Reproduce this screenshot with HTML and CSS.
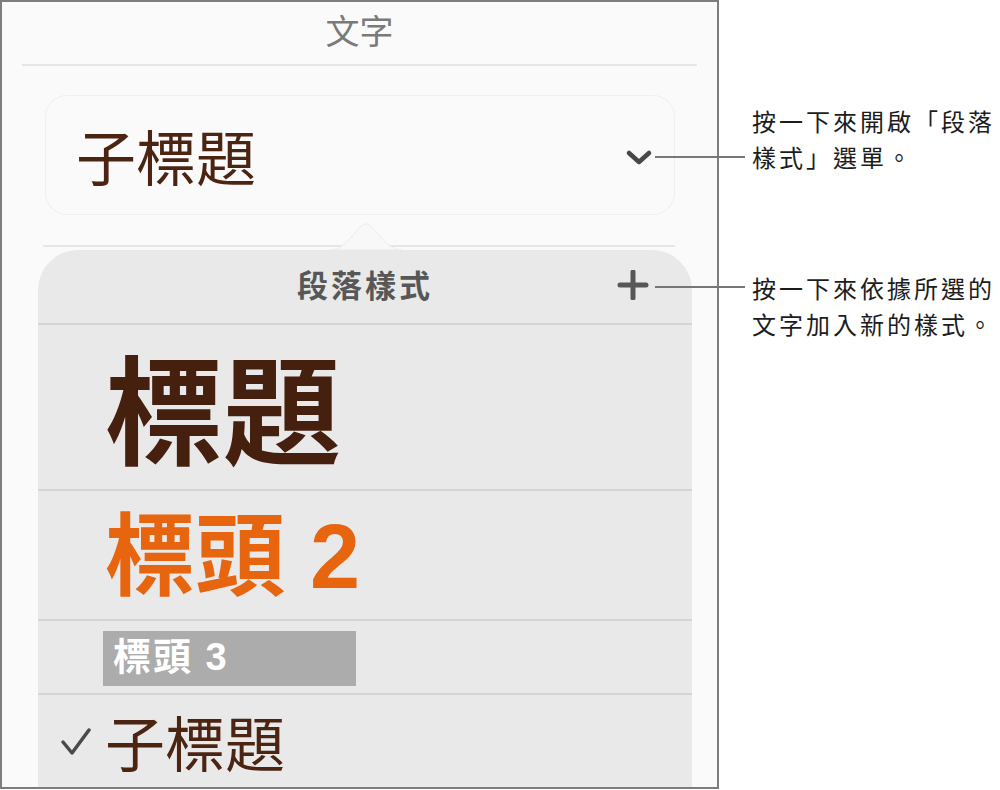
FILE: index.html
```html
<!DOCTYPE html>
<html lang="zh-Hant">
<head>
    <meta charset="UTF-8">
    <title>段落樣式</title>
    <link rel="stylesheet" href="styles.css">
</head>
<body>
    <div class="panel">
        <div class="panel-title">文字</div>
        <div class="rule rule-top"></div>

        <div class="style-select">
            <span class="current-style">子標題</span>
            <svg class="chevron" width="28" height="17" viewBox="0 0 28 17">
                <path d="M4 4 L14 13 L24 4" fill="none" stroke="#474747" stroke-width="4.5" stroke-linecap="round" stroke-linejoin="round"/>
            </svg>
        </div>
        <div class="rule rule-mid"></div>

        <div class="popover">
            <svg class="popover-arrow" width="72" height="28" viewBox="0 0 72 28">
                <path d="M0 28 C18 28 27 2 36 2 C45 2 54 28 72 28 Z" fill="#f8f8f8" stroke="#ececec" stroke-width="1"/>
            </svg>
            <div class="popover-header">
                <span></span>
                <span class="popover-title">段落樣式</span>
                <svg class="plus" width="32" height="30" viewBox="0 0 32 30">
                    <path d="M3 15 H29 M16 2 V28" fill="none" stroke="#575757" stroke-width="5" stroke-linecap="round"/>
                </svg>
            </div>
            <div class="style-row row-title"><span>標題</span></div>
            <div class="style-row row-h2"><span>標頭 2</span></div>
            <div class="style-row row-h3"><span class="h3-label">標頭 3</span></div>
            <div class="style-row row-sub">
                <svg class="check" width="30" height="27" viewBox="0 0 30 27">
                    <path d="M2 14 L11 25 L28 2" fill="none" stroke="#4a4a4a" stroke-width="3.5" stroke-linecap="round" stroke-linejoin="round"/>
                </svg>
                <span>子標題</span>
            </div>
        </div>
    </div>

    <div class="notes">
        <p class="note note-menu">按一下來開啟「段落<br>樣式」選單。</p>
        <p class="note note-add">按一下來依據所選的<br>文字加入新的樣式。</p>
    </div>

    <!-- leader lines from the controls to the notes -->
    <div class="leader leader-menu"></div>
    <div class="leader leader-add"></div>
</body>
</html>
```

FILE: styles.css
```css
/* Общая разметка */
body {
    margin: 0;
    width: 1000px;
    height: 790px;
    display: flex;
    background-color: #ffffff;
    font-family: "Noto Sans CJK TC", sans-serif;
    position: relative;
    overflow: hidden;
}

/* Панель инспектора */
.panel {
    width: 719px;
    height: 789px;
    box-sizing: border-box;
    border: 2px solid #7d7d7d;
    background-color: #fafafa;
    display: flex;
    flex-direction: column;
    overflow: hidden;
    flex-shrink: 0;
}

.panel-title {
    height: 62px;
    line-height: 56px;
    text-align: center;
    font-size: 34px;
    color: #7a7a7a;
}

.rule {
    height: 2px;
    background-color: #e6e6e6;
    flex-shrink: 0;
}

.rule-top {
    margin: 0 20px;
}

.rule-mid {
    margin: 30px 42px 0 41px;
}

/* Выпадающий список стиля */
.style-select {
    margin: 29px 42px 0 43px;
    height: 120px;
    box-sizing: border-box;
    border: 1px solid #efefef;
    border-radius: 22px;
    display: flex;
    align-items: center;
    justify-content: space-between;
    padding: 0 21px 0 30px;
    flex-shrink: 0;
}

.current-style {
    font-size: 60px;
    color: #4b2412;
    line-height: 1;
}

.chevron {
    margin-top: 4px;
}

/* Всплывающее меню */
.popover {
    position: relative;
    margin: 3px 25px 0 36px;
    flex: 1;
    background-color: #e9e9e9;
    border-radius: 40px 40px 0 0;
}

.popover-arrow {
    position: absolute;
    top: -28px;
    left: 292px;
}

.popover-header {
    height: 73px;
    border-bottom: 2px solid #d5d5d5;
    display: grid;
    grid-template-columns: 1fr auto 1fr;
    align-items: center;
}

.popover-title {
    font-size: 31px;
    font-weight: 700;
    letter-spacing: 3px;
    color: #575757;
    margin-top: -6px;
}

.plus {
    justify-self: end;
    margin-right: 43px;
    margin-top: -4px;
}

.style-row {
    border-bottom: 2px solid #d5d5d5;
    display: flex;
    align-items: center;
    padding-left: 67px;
}

.row-title {
    height: 164px;
    font-size: 118px;
    font-weight: 700;
    color: #46200f;
    line-height: 1;
}

.row-title span {
    margin-top: -4px;
}

.row-h2 {
    height: 128px;
    font-family: "Liberation Sans", "Noto Sans CJK TC", sans-serif;
    font-size: 90px;
    font-weight: 700;
    color: #e8650f;
    line-height: 1;
}

.row-h2 span {
    margin-top: 4px;
}

.row-h3 {
    height: 72px;
    padding-left: 65px;
}

.h3-label {
    display: block;
    width: 243px;
    height: 55px;
    line-height: 53px;
    padding-left: 10px;
    margin-top: 2px;
    background-color: #acacac;
    font-family: "Liberation Sans", "Noto Sans CJK TC", sans-serif;
    font-size: 38px;
    font-weight: 700;
    letter-spacing: 2px;
    color: #ffffff;
}

.row-sub {
    border-bottom: none;
    padding: 16px 0 0 23px;
    align-items: flex-start;
    font-size: 60px;
    color: #4b2412;
    line-height: 1;
}

.check {
    margin: 17px 14px 0 0;
}

/* Подписи справа */
.notes {
    margin-left: 33px;
    padding-top: 103px;
}

.note {
    margin: 0;
    font-size: 24px;
    line-height: 36px;
    letter-spacing: 3px;
    color: #1c1c1c;
    white-space: nowrap;
}

.note-add {
    margin-top: 95px;
}

.leader {
    position: absolute;
    left: 655px;
    width: 90px;
    height: 2px;
    background-color: #777777;
}

.leader-menu {
    top: 156px;
}

.leader-add {
    top: 286px;
}
```
